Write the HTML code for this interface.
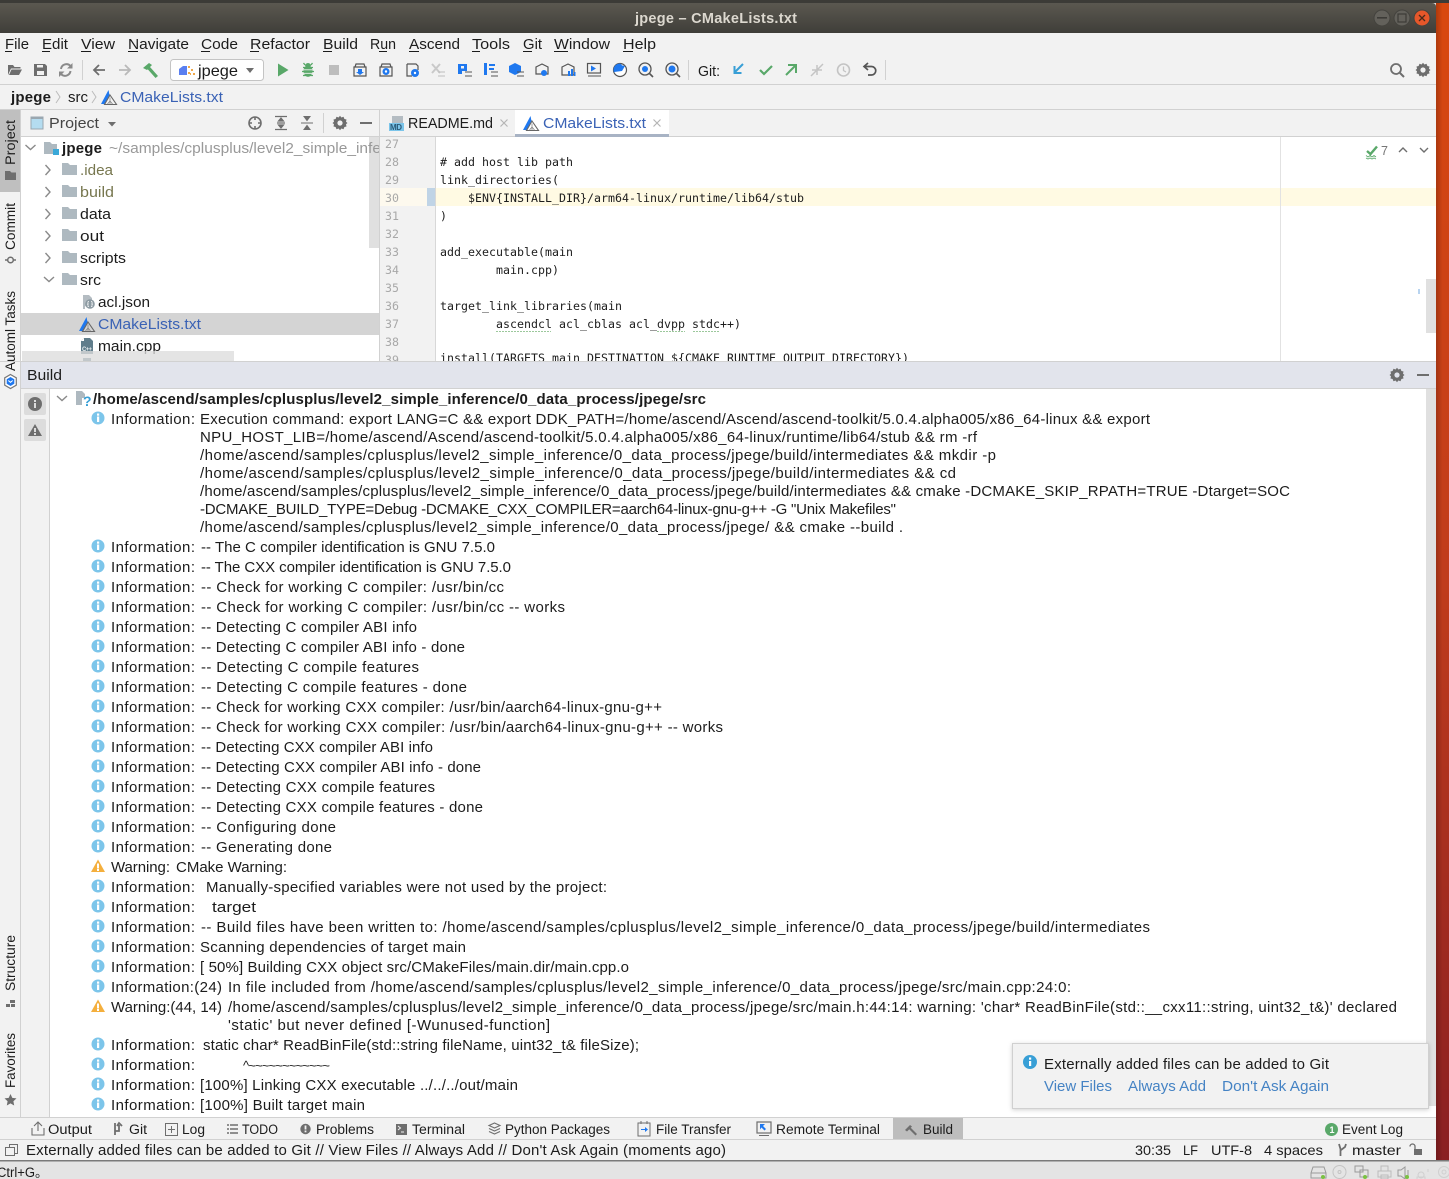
<!DOCTYPE html>
<html lang="en"><head><meta charset="utf-8"><title>jpege – CMakeLists.txt</title>
<style>
html,body{margin:0;padding:0;background:#e4e4e4;overflow:hidden}
svg{display:block}
text{font-family:"Liberation Sans","Noto Sans CJK SC",sans-serif;font-size:15px;fill:#1c1c1c;white-space:pre}
.b{font-weight:bold}
.s{font-size:13.5px}
.m{font-family:"DejaVu Sans Mono",monospace;font-size:11.6px;fill:#1c1c1c}
.n{font-family:"DejaVu Sans Mono",monospace;font-size:11.6px;fill:#a8a8a8}
.o{fill:#77774f}
.g{fill:#8c8c8c}
.bl{fill:#3a62b5}
.lk{fill:#4583c4}
.ic{fill:#6e6e6e}
.st{fill:none;stroke:#6e6e6e;stroke-width:1.6}
</style></head><body>
<svg width="1449" height="1179" viewBox="0 0 1449 1179" xmlns="http://www.w3.org/2000/svg">
<defs>
<linearGradient id="tb" x1="0" y1="0" x2="0" y2="1"><stop offset="0" stop-color="#5b5850"/><stop offset="1" stop-color="#3f3e39"/></linearGradient>
<linearGradient id="de" x1="0" y1="0" x2="0" y2="1"><stop offset="0" stop-color="#d9480f"/><stop offset=".5" stop-color="#c03c1c"/><stop offset="1" stop-color="#8a1f22"/></linearGradient>
<linearGradient id="de2" x1="0" y1="0" x2="1" y2="0"><stop offset="0" stop-color="#000" stop-opacity=".2"/><stop offset=".5" stop-color="#000" stop-opacity="0"/></linearGradient>
<filter id="sh" x="-5%" y="-20%" width="110%" height="140%"><feDropShadow dx="0" dy="1" stdDeviation="2" flood-color="#000" flood-opacity=".18"/></filter>
<g id="i"><circle cx="0" cy="0" r="6.5" fill="#7cc5ea"/><rect x="-1" y="-1.5" width="2.2" height="5.5" fill="#fff"/><rect x="-1" y="-4.5" width="2.2" height="2.2" fill="#fff"/></g>
<g id="w"><path d="M0-6.5L7 6H-7Z" fill="#f4af3d"/><rect x="-1" y="-2.5" width="2" height="5" fill="#fff"/><rect x="-1" y="3" width="2" height="2" fill="#fff"/></g>
<path id="f" d="M0 1h6l2 2h7v10H0Z" fill="#aeb9c0"/>
<path id="cr" d="M0 0l4.500 5-4.500 5" fill="none" stroke="#8a8a8a" stroke-width="1.400"/>
<path id="cd" d="M0 0l5 4.500 5-4.500" fill="none" stroke="#8a8a8a" stroke-width="1.400"/>
<g id="cm"><path d="M7.500 0L0 14h3.500L8.500 5Z" fill="#1f78ef"/><path d="M9 5l6.500 9.500H3.500Z" fill="none" stroke="#666" stroke-width="1.100"/><path d="M9 7.500v6.500M6.500 14l2.500-3 2.500 3" fill="none" stroke="#888" stroke-width=".8"/></g>
<path id="gear" d="M6-1.300L7.500 0 6 1.300 6.500 3.500 4.400 4 3.500 6.200 1.400 5.500 0 7.200-1.400 5.500-3.500 6.200-4.400 4-6.500 3.500-6 1.300-7.500 0-6-1.300-6.500-3.500-4.400-4-3.500-6.200-1.400-5.500 0-7.200 1.400-5.500 3.500-6.200 4.400-4 6.500-3.500ZM0-2.600A2.600 2.600 0 1 0 0 2.600 2.600 2.600 0 1 0 0-2.600Z" fill="#6e6e6e" fill-rule="evenodd"/>
<g id="xx"><path d="M-3.500-3.500L3.500 3.500M3.500-3.500L-3.500 3.500" stroke="#b5b5b5" stroke-width="1.200" fill="none"/></g>
<g id="mag"><circle cx="-1" cy="-1" r="6" fill="none" stroke="#555" stroke-width="1.300"/><path d="M3.500 3.500L7 7" stroke="#555" stroke-width="1.600"/></g>
</defs>

<!-- desktop + window base -->
<rect width="1449" height="1179" fill="#e4e4e4"/>
<rect x="1436" y="0" width="13" height="1160" fill="url(#de)"/>
<rect x="1436" y="0" width="13" height="1160" fill="url(#de2)"/>
<rect width="1449" height="3" fill="#3c3b37"/>
<rect x="0" y="33" width="1436" height="1127" fill="#f2f2f2"/>
<path d="M0 3H1432Q1436 3 1436 7V33H0Z" fill="url(#tb)"/>

<text class="b" x="635" y="23" textLength="162" style="fill:#dcd8cf;font-size:14.5px">jpege – CMakeLists.txt</text>
<circle cx="1382" cy="18" r="8" fill="#63615b" stroke="#44433e"/><rect x="1377" y="17" width="10" height="1.600" fill="#3c3b37"/>
<circle cx="1402" cy="18" r="8" fill="#63615b" stroke="#44433e"/><rect x="1398" y="14" width="8" height="8" fill="none" stroke="#3c3b37" stroke-width="1.200"/>
<circle cx="1422" cy="18" r="8" fill="#e6572a" stroke="#44433e"/><path d="M1419 15l6 6M1425 15l-6 6" stroke="#4a2a1a" stroke-width="1.300"/>

<!-- menu -->
<text x="5" y="49" textLength="24" lengthAdjust="spacingAndGlyphs">File</text><text x="42" y="49" textLength="26" lengthAdjust="spacingAndGlyphs">Edit</text><text x="81" y="49" textLength="34" lengthAdjust="spacingAndGlyphs">View</text><text x="128" y="49" textLength="61" lengthAdjust="spacingAndGlyphs">Navigate</text><text x="201" y="49" textLength="37" lengthAdjust="spacingAndGlyphs">Code</text><text x="250" y="49" textLength="60" lengthAdjust="spacingAndGlyphs">Refactor</text><text x="323" y="49" textLength="35" lengthAdjust="spacingAndGlyphs">Build</text><text x="370" y="49" textLength="26" lengthAdjust="spacingAndGlyphs">Run</text><text x="409" y="49" textLength="51" lengthAdjust="spacingAndGlyphs">Ascend</text><text x="472" y="49" textLength="38" lengthAdjust="spacingAndGlyphs">Tools</text><text x="523" y="49" textLength="19" lengthAdjust="spacingAndGlyphs">Git</text><text x="554" y="49" textLength="56" lengthAdjust="spacingAndGlyphs">Window</text><text x="623" y="49" textLength="33" lengthAdjust="spacingAndGlyphs">Help</text>
<g fill="#1c1c1c"><rect x="5" y="51" width="7" height="1"/><rect x="42" y="51" width="8" height="1"/><rect x="81" y="51" width="10" height="1"/><rect x="128" y="51" width="10" height="1"/><rect x="201" y="51" width="9" height="1"/><rect x="250" y="51" width="9" height="1"/><rect x="323" y="51" width="9" height="1"/><rect x="379" y="51" width="8" height="1"/><rect x="409" y="51" width="10" height="1"/><rect x="472" y="51" width="8" height="1"/><rect x="523" y="51" width="9" height="1"/><rect x="554" y="51" width="14" height="1"/><rect x="623" y="51" width="10" height="1"/></g>

<!-- toolbar -->
<rect x="0" y="84" width="1436" height="1" fill="#d1d1d1"/>
<rect x="0" y="109" width="1436" height="1" fill="#d1d1d1"/>
<path d="M8 65h5l1.500 2h6v1.500H11L8 75ZM11.500 69.500H22L19 75H9Z" fill="#6e6e6e"/>
<path d="M34 64h11l2 2v10H34Z" fill="#6e6e6e"/><rect x="37" y="65" width="6" height="2.500" fill="#f2f2f2"/><rect x="37" y="71" width="7" height="4" fill="#f2f2f2"/>
<path d="M61 69a5.500 5.500 0 0 1 9.500-3M70.500 71a5.500 5.500 0 0 1-9.500 3" fill="none" stroke="#8a8a8a" stroke-width="2"/><path d="M72.500 63v5.500H67ZM59 77v-5.500h5.500Z" fill="#8a8a8a"/>
<rect x="82" y="60" width="1" height="20" fill="#d1d1d1"/>
<path d="M105 70H94M99 65l-5 5 5 5" fill="none" stroke="#6e6e6e" stroke-width="1.800"/>
<path d="M119 70h11M125 65l5 5-5 5" fill="none" stroke="#b9b9b9" stroke-width="1.800"/>
<path d="M143 68l6-5 3 2-5 5ZM150 67l8 9-2.500 2-8-9Z" fill="#59a869"/>
<rect x="170.500" y="59.500" width="93" height="21" rx="3" fill="#fff" stroke="#c4c4c4"/>
<path d="M179 75v-6l4-3h4v9Z" fill="#5a7ff0"/><path d="M188 66h2v2h-2ZM191 69h2v2h-2ZM188 72h2v2h-2ZM193 73h2v2h-2ZM190 73h1v2h-1Z" fill="#f0a84a"/>
<text x="198" y="76" textLength="40" lengthAdjust="spacingAndGlyphs" style="font-size:16px">jpege</text>
<path d="M246 68h8l-4 5Z" fill="#6e6e6e"/>
<path d="M278 63.500L288.500 70 278 76.500Z" fill="#59a869"/>
<path d="M303 67.500h10M302 71.500h12M303 75.500h10M305 65l-1.500-2M311 65l1.500-2" stroke="#59a869" stroke-width="1.300" fill="none"/><ellipse cx="308" cy="71" rx="4.500" ry="5.800" fill="#59a869"/><path d="M305 66a3 3 0 0 1 6 0Z" fill="#59a869"/><path d="M304 69.800h8M304 73.300h8" stroke="#f2f2f2" stroke-width=".9"/>
<rect x="329" y="65" width="10" height="10" fill="#bdbdbd"/>
<g fill="none" stroke="#555" stroke-width="1.200"><path d="M354 67h12v9h-12ZM355 67l1-3h8l1 3"/><path d="M380 67h12v9h-12ZM381 67l1-3h8l1 3"/><path d="M407 64h9l2 2v4M407 64v12h5"/></g>
<path d="M358 69h4v3h2l-4 3-4-3h2Z" fill="#1f78ef"/><circle cx="386" cy="71.500" r="3.500" fill="#1f78ef"/><circle cx="386" cy="71.500" r="1.200" fill="#fff"/><circle cx="415" cy="73" r="4" fill="#1f78ef"/><circle cx="415" cy="73" r="1.200" fill="#fff"/>
<path d="M432 64l8 9M440 64l-8 9" stroke="#c9c9c9" stroke-width="2"/><path d="M438 72h7M438 76h7" stroke="#bdbdbd"/>
<path d="M458 64h9v7h-5v3h-4Z" fill="#1f78ef"/><rect x="461" y="66" width="3" height="2.500" fill="#f2f2f2"/>
<path d="M484 63h3v12h-3ZM489 64h6v2h-6ZM489 68h5v2h-5Z" fill="#1f78ef"/>
<path d="M509 66l6-3 6 3v6l-6 3-6-3Z" fill="#1f78ef"/>
<path d="M465 72h7M472 76h-7M491 72h7M498 76h-7M517 72h7M524 76h-7" stroke="#555" stroke-width="1" fill="none"/>
<path d="M536 67l6-3 6 3v7h-12Z" fill="none" stroke="#555" stroke-width="1.200"/><circle cx="544" cy="73" r="3" fill="#1f78ef"/>
<path d="M562 67l6-3 6 3v8h-12Z" fill="none" stroke="#555" stroke-width="1.200"/><path d="M568 71h2v5h-2ZM571 69h2v7h-2ZM574 72h1.500v4H574Z" fill="#1f78ef"/>
<rect x="587.500" y="63.500" width="13" height="9.500" fill="none" stroke="#555" stroke-width="1.200"/><path d="M591 65.500l5 3-5 3Z" fill="#1f78ef"/><path d="M588 76h13" stroke="#555"/>
<circle cx="620" cy="70" r="6.500" fill="#fff" stroke="#555" stroke-width="1.200"/><path d="M620 63.500a6.500 6.500 0 0 0-6 9L622 65Z" fill="#1f78ef"/><path d="M614 72l6-7 5 1-3 5Z" fill="#1f78ef"/>
<use href="#mag" x="646" y="70"/><circle cx="645" cy="69" r="3" fill="#1f78ef"/>
<use href="#mag" x="673" y="70"/><circle cx="672" cy="69" r="3.500" fill="#1f78ef"/>
<rect x="688" y="60" width="1" height="20" fill="#d1d1d1"/>
<text x="698" y="76" textLength="22" lengthAdjust="spacingAndGlyphs">Git:</text>
<path d="M743 64l-8 8M734.500 66v7h7" fill="none" stroke="#389fd6" stroke-width="2"/>
<path d="M760 70l4 4 8-8" fill="none" stroke="#59a869" stroke-width="2.200"/>
<path d="M786 75l9-9M788 65h8v8" fill="none" stroke="#59a869" stroke-width="2"/>
<path d="M811 76l5-5M817 70l6-6M812 70h5v5M817 65v5h5" fill="none" stroke="#c4c4c4" stroke-width="1.500"/>
<circle cx="843.500" cy="70" r="6" fill="none" stroke="#c4c4c4" stroke-width="1.600"/><path d="M843.500 66.500v4l2.500 1.500" fill="none" stroke="#c4c4c4" stroke-width="1.300"/>
<path d="M868 63l-4 3.500 4 3.500M864.500 66.500h7a4 4 0 0 1 0 8.500H868" fill="none" stroke="#555" stroke-width="1.700"/>
<rect x="885" y="60" width="1" height="20" fill="#d1d1d1"/>
<circle cx="1396" cy="69" r="5" fill="none" stroke="#6e6e6e" stroke-width="1.800"/><path d="M1400 73l4 4" stroke="#6e6e6e" stroke-width="2"/>
<use href="#gear" x="1423" y="70"/>

<!-- nav bar -->
<text class="b" x="11" y="102" textLength="40">jpege</text>
<path d="M56 91l4 6-4 6" fill="none" stroke="#bbb"/>
<text x="68" y="102" textLength="20" lengthAdjust="spacingAndGlyphs">src</text>
<path d="M92 91l4 6-4 6" fill="none" stroke="#bbb"/>
<use href="#cm" x="101" y="90"/>
<text class="bl" x="120" y="102" textLength="103" lengthAdjust="spacingAndGlyphs">CMakeLists.txt</text>

<!-- stripe + panel headers -->
<rect x="0" y="136" width="1436" height="1" fill="#d1d1d1"/>
<rect x="0" y="110" width="20" height="82" fill="#bfbfbf"/>
<rect x="20" y="110" width="1" height="1007" fill="#d1d1d1"/>
<rect x="31" y="117" width="12" height="12" fill="#b4dcf0" stroke="#9aa7b0"/><rect x="31" y="117" width="12" height="2" fill="#9aa7b0"/>
<text x="49" y="128" textLength="50" lengthAdjust="spacingAndGlyphs" style="fill:#444">Project</text>
<path d="M108 122h8l-4 4.500Z" fill="#6e6e6e"/>
<circle cx="255" cy="123" r="6" class="st"/><path d="M255 117v3M255 126v3M249 123h3M258 123h3" stroke="#6e6e6e" stroke-width="1.600"/>
<path d="M275 116.500h12M275 129.500h12M281 118l-2.500 3h5ZM281 128l-2.500-3h5ZM277 123h8" stroke="#6e6e6e" stroke-width="1.200" fill="#6e6e6e"/>
<path d="M301 123h12M304 116.500l3 4 3-4ZM304 129.500l3-4 3 4Z" stroke="#6e6e6e" stroke-width="1" fill="#6e6e6e"/>
<rect x="323" y="113" width="1" height="20" fill="#d1d1d1"/>
<use href="#gear" x="340" y="123"/>
<rect x="360" y="122" width="12" height="2" fill="#6e6e6e"/>
<rect x="379" y="110" width="1" height="251" fill="#d1d1d1"/>

<!-- tabs -->
<rect x="392" y="116" width="11" height="8" fill="#b4bcc2"/><rect x="389" y="123" width="15" height="8" fill="#7cc5ea"/><text x="390" y="130" textLength="12" style="font-size:8px;font-weight:bold;fill:#2a5a78">MD</text>
<text x="408" y="128" textLength="85" lengthAdjust="spacingAndGlyphs">README.md</text><use href="#xx" x="504" y="123"/>
<rect x="515" y="110" width="154" height="24" fill="#fff"/><rect x="515" y="134" width="154" height="3" fill="#a8b3c4"/>
<use href="#cm" x="523" y="116"/>
<text class="bl" x="543" y="128" textLength="103" lengthAdjust="spacingAndGlyphs">CMakeLists.txt</text><use href="#xx" x="657" y="123"/>

<!-- tree -->
<rect x="21" y="137" width="358" height="224" fill="#fff"/>
<rect x="369" y="137" width="10" height="111" fill="#e0e0e0"/>
<rect x="21" y="313" width="358" height="22" fill="#d4d4d4"/>
<use href="#cd" x="25.500" y="145"/>
<path d="M44 142h6l2 2h5v10H44Z" fill="#aeb9c0"/><rect x="53" y="149" width="6" height="6" fill="#3aa8d8"/>
<text class="b" x="62" y="153" textLength="40">jpege</text>
<svg x="0" y="137" width="379" height="30"><text x="109" y="16" textLength="272" lengthAdjust="spacingAndGlyphs" style="fill:#999">~/samples/cplusplus/level2_simple_infe</text></svg>
<use href="#cr" x="45.500" y="165"/><use href="#f" x="62" y="162"/><text class="o" x="80" y="175" textLength="33" lengthAdjust="spacingAndGlyphs">.idea</text>
<use href="#cr" x="45.500" y="187"/><use href="#f" x="62" y="184"/><text class="o" x="80" y="197" textLength="34" lengthAdjust="spacingAndGlyphs">build</text>
<use href="#cr" x="45.500" y="209"/><use href="#f" x="62" y="206"/><text x="80" y="219" textLength="31" lengthAdjust="spacingAndGlyphs">data</text>
<use href="#cr" x="45.500" y="231"/><use href="#f" x="62" y="228"/><text x="80" y="241" textLength="24" lengthAdjust="spacingAndGlyphs">out</text>
<use href="#cr" x="45.500" y="253"/><use href="#f" x="62" y="250"/><text x="80" y="263" textLength="46" lengthAdjust="spacingAndGlyphs">scripts</text>
<use href="#cd" x="44" y="277"/><use href="#f" x="62" y="272"/><text x="80" y="285" textLength="21" lengthAdjust="spacingAndGlyphs">src</text>
<path d="M83 295h6l3 3v5h-3a5 5 0 0 0-4 6h-2Z" fill="#b4bcc2"/><circle cx="90" cy="304" r="4.800" fill="#8c9aa2"/><path d="M89 301.500q-1.500 0-1 1.500t-1 1q1.500 0 1 1.500t1 1M91 301.500q1.500 0 1 1.500t1 1q-1.500 0-1 1.500t-1 1" fill="none" stroke="#fff" stroke-width=".7"/><text x="98" y="307" textLength="52" lengthAdjust="spacingAndGlyphs">acl.json</text>
<use href="#cm" x="79" y="317"/><text class="bl" x="98" y="329" textLength="103" lengthAdjust="spacingAndGlyphs">CMakeLists.txt</text>
<path d="M84 338h6l3 3v13H81v-13Z" fill="#607d8b"/><path d="M84 338v3h-3Z" fill="#fff"/><text x="82" y="351" textLength="10" style="font-size:6px;font-weight:bold;fill:#e8eef0">C++</text><text x="98" y="351" textLength="63" lengthAdjust="spacingAndGlyphs">main.cpp</text>
<rect x="83" y="358" width="8" height="3" fill="#607d8b"/>
<rect x="22" y="351" width="212" height="10" fill="#dcdcdc" fill-opacity=".78"/>

<!-- stripe text -->
<text class="s" transform="translate(15,165) rotate(-90)" textLength="45" lengthAdjust="spacingAndGlyphs">Project</text>
<path d="M5 171h5l1.500 1.500H16V180H5Z" fill="#6e6e6e"/>
<text class="s" transform="translate(15,250) rotate(-90)" textLength="47" lengthAdjust="spacingAndGlyphs">Commit</text>
<circle cx="10.500" cy="260" r="2.800" fill="none" stroke="#6e6e6e" stroke-width="1.500"/><path d="M5 260h3M13 260h3" stroke="#6e6e6e" stroke-width="1.500"/>
<text class="s" transform="translate(15,371) rotate(-90)" textLength="80" lengthAdjust="spacingAndGlyphs">Automl Tasks</text>
<path d="M10.500 374.500l5.800 3.300v7.400l-5.800 3.300-5.800-3.300v-7.400Z" fill="#fff" stroke="#777" stroke-width="1.200"/><path d="M10.500 377l3.800 2.200v4.600l-3.800 2.200-3.800-2.200v-4.600Z" fill="#1f78ef"/><path d="M8.300 380.500l2.200 1.800 2.200-1.800" stroke="#fff" fill="none"/>
<text class="s" transform="translate(15,991) rotate(-90)" textLength="56" lengthAdjust="spacingAndGlyphs">Structure</text>
<path d="M10 1000h5v3h-5ZM6 1004h4v3H6ZM11 1004h4v3h-4Z" fill="#6e6e6e"/>
<text class="s" transform="translate(15,1088) rotate(-90)" textLength="55" lengthAdjust="spacingAndGlyphs">Favorites</text>
<path d="M10.500 1094l1.800 3.900 4.200.5-3.100 2.900.8 4.200-3.700-2.100-3.700 2.100.8-4.200-3.100-2.900 4.200-.5Z" fill="#6e6e6e"/>

<!-- editor -->
<rect x="380" y="137" width="1056" height="224" fill="#fff"/>
<rect x="380" y="137" width="55" height="224" fill="#f2f2f2"/>
<rect x="435" y="137" width="1" height="224" fill="#d8d8d8"/>
<rect x="436" y="188" width="1000" height="18" fill="#fffae3"/>
<rect x="380" y="188" width="47" height="18" fill="#fdf9ee"/>
<rect x="427" y="188" width="8" height="18" fill="#c0d4e6"/>
<rect x="1280" y="137" width="1" height="224" fill="#e2e2e2"/>
<text class="n" x="385" y="148">27</text><text class="n" x="385" y="166">28</text><text class="n" x="385" y="184">29</text><text class="n" x="385" y="202">30</text><text class="n" x="385" y="220">31</text><text class="n" x="385" y="238">32</text><text class="n" x="385" y="256">33</text><text class="n" x="385" y="274">34</text><text class="n" x="385" y="292">35</text><text class="n" x="385" y="310">36</text><text class="n" x="385" y="328">37</text><text class="n" x="385" y="346">38</text>
<text class="m" x="440" y="166" textLength="133"># add host lib path</text>
<text class="m" x="440" y="184" textLength="119">link_directories(</text>
<text class="m" x="468" y="202" textLength="336">$ENV{INSTALL_DIR}/arm64-linux/runtime/lib64/stub</text>
<text class="m" x="440" y="220" textLength="7">)</text>
<text class="m" x="440" y="256" textLength="133">add_executable(main</text>
<text class="m" x="496" y="274" textLength="63">main.cpp)</text>
<text class="m" x="440" y="310" textLength="182">target_link_libraries(main</text>
<text class="m" x="496" y="328" textLength="245">ascendcl acl_cblas acl_dvpp stdc++)</text>
<path d="M496 331.500h55M657 331.500h28M693 331.500h26" stroke="#9cc89c" stroke-width="1" stroke-dasharray="2 1"/>
<svg x="380" y="340" width="1056" height="21"><text class="n" x="5" y="24">39</text><text class="m" x="60" y="22" textLength="469">install(TARGETS main DESTINATION ${CMAKE_RUNTIME_OUTPUT_DIRECTORY})</text></svg>
<path d="M1367 151l3.500 3 6.500-7.500" fill="none" stroke="#59a869" stroke-width="2.400"/><path d="M1366 155.500l2 1.500 2-1.500 2 1.500 2-1.500 2 1.500M1366 158l2 1 2-1 2 1 2-1 2 1" fill="none" stroke="#59a869" stroke-width=".8"/>
<text x="1381" y="155" textLength="7" style="font-size:12.500px;fill:#777">7</text>
<path d="M1399 152l4-4 4 4M1420 148l4 4 4-4" fill="none" stroke="#6e6e6e" stroke-width="1.400"/>
<rect x="1426" y="279" width="10" height="54" fill="#e0e0e0"/>
<rect x="1418" y="289" width="2" height="5" fill="#b8d4f0"/>

<!-- build header -->
<rect x="21" y="361" width="1415" height="27" fill="#e2e4ec"/>
<rect x="0" y="361" width="1436" height="1" fill="#d1d1d1"/><rect x="21" y="388" width="1415" height="1" fill="#d1d1d1"/>
<text x="27" y="380" textLength="35" lengthAdjust="spacingAndGlyphs">Build</text>
<use href="#gear" x="1397" y="375"/><rect x="1417" y="374" width="12" height="2" fill="#6e6e6e"/>

<!-- build body -->
<rect x="49" y="389" width="1387" height="728" fill="#fff"/>
<rect x="49" y="389" width="1" height="728" fill="#d1d1d1"/>
<rect x="1426" y="389" width="10" height="717" fill="#e0e0e0"/>
<rect x="24" y="393" width="22" height="22" rx="2" fill="#dcdcdc"/><circle cx="35" cy="404" r="7" fill="#6e6e6e"/><rect x="34" y="403" width="2" height="5" fill="#dcdcdc"/><rect x="34" y="400" width="2" height="2" fill="#dcdcdc"/>
<rect x="24" y="419" width="22" height="22" rx="2" fill="#dcdcdc"/><path d="M35 424l7 12H28Z" fill="#6e6e6e"/><rect x="34" y="428" width="2" height="4" fill="#dcdcdc"/><rect x="34" y="433" width="2" height="2" fill="#dcdcdc"/>
<use href="#cd" x="57" y="396"/>
<path d="M76 391h6l3 3v4h-3v7H76Z" fill="#aeb9c0"/><text x="83" y="406" textLength="8" style="font-size:14px;font-weight:bold;fill:#389fd6">?</text>
<text class="b" x="93" y="404" textLength="613">/home/ascend/samples/cplusplus/level2_simple_inference/0_data_process/jpege/src</text>

<use href="#i" x="98" y="418"/><text x="111" y="424" textLength="84">Information:</text>
<text x="200" y="424" textLength="950">Execution command: export LANG=C &amp;&amp; export DDK_PATH=/home/ascend/Ascend/ascend-toolkit/5.0.4.alpha005/x86_64-linux &amp;&amp; export</text>
<text x="200" y="442" textLength="777">NPU_HOST_LIB=/home/ascend/Ascend/ascend-toolkit/5.0.4.alpha005/x86_64-linux/runtime/lib64/stub &amp;&amp; rm -rf</text>
<text x="200" y="460" textLength="796">/home/ascend/samples/cplusplus/level2_simple_inference/0_data_process/jpege/build/intermediates &amp;&amp; mkdir -p</text>
<text x="200" y="478" textLength="756">/home/ascend/samples/cplusplus/level2_simple_inference/0_data_process/jpege/build/intermediates &amp;&amp; cd</text>
<text x="200" y="496" textLength="1090">/home/ascend/samples/cplusplus/level2_simple_inference/0_data_process/jpege/build/intermediates &amp;&amp; cmake -DCMAKE_SKIP_RPATH=TRUE -Dtarget=SOC</text>
<text x="200" y="514" textLength="696">-DCMAKE_BUILD_TYPE=Debug -DCMAKE_CXX_COMPILER=aarch64-linux-gnu-g++ -G "Unix Makefiles"</text>
<text x="200" y="532" textLength="703">/home/ascend/samples/cplusplus/level2_simple_inference/0_data_process/jpege/ &amp;&amp; cmake --build .</text>

<use href="#i" x="98" y="546"/><text x="111" y="552" textLength="84">Information:</text><text x="201" y="552" textLength="294">-- The C compiler identification is GNU 7.5.0</text>
<use href="#i" x="98" y="566"/><text x="111" y="572" textLength="84">Information:</text><text x="201" y="572" textLength="310">-- The CXX compiler identification is GNU 7.5.0</text>
<use href="#i" x="98" y="586"/><text x="111" y="592" textLength="84">Information:</text><text x="201" y="592" textLength="303">-- Check for working C compiler: /usr/bin/cc</text>
<use href="#i" x="98" y="606"/><text x="111" y="612" textLength="84">Information:</text><text x="201" y="612" textLength="364">-- Check for working C compiler: /usr/bin/cc -- works</text>
<use href="#i" x="98" y="626"/><text x="111" y="632" textLength="84">Information:</text><text x="201" y="632" textLength="216">-- Detecting C compiler ABI info</text>
<use href="#i" x="98" y="646"/><text x="111" y="652" textLength="84">Information:</text><text x="201" y="652" textLength="264">-- Detecting C compiler ABI info - done</text>
<use href="#i" x="98" y="666"/><text x="111" y="672" textLength="84">Information:</text><text x="201" y="672" textLength="218">-- Detecting C compile features</text>
<use href="#i" x="98" y="686"/><text x="111" y="692" textLength="84">Information:</text><text x="201" y="692" textLength="266">-- Detecting C compile features - done</text>
<use href="#i" x="98" y="706"/><text x="111" y="712" textLength="84">Information:</text><text x="201" y="712" textLength="461">-- Check for working CXX compiler: /usr/bin/aarch64-linux-gnu-g++</text>
<use href="#i" x="98" y="726"/><text x="111" y="732" textLength="84">Information:</text><text x="201" y="732" textLength="522">-- Check for working CXX compiler: /usr/bin/aarch64-linux-gnu-g++ -- works</text>
<use href="#i" x="98" y="746"/><text x="111" y="752" textLength="84">Information:</text><text x="201" y="752" textLength="232">-- Detecting CXX compiler ABI info</text>
<use href="#i" x="98" y="766"/><text x="111" y="772" textLength="84">Information:</text><text x="201" y="772" textLength="280">-- Detecting CXX compiler ABI info - done</text>
<use href="#i" x="98" y="786"/><text x="111" y="792" textLength="84">Information:</text><text x="201" y="792" textLength="234">-- Detecting CXX compile features</text>
<use href="#i" x="98" y="806"/><text x="111" y="812" textLength="84">Information:</text><text x="201" y="812" textLength="282">-- Detecting CXX compile features - done</text>
<use href="#i" x="98" y="826"/><text x="111" y="832" textLength="84">Information:</text><text x="201" y="832" textLength="135">-- Configuring done</text>
<use href="#i" x="98" y="846"/><text x="111" y="852" textLength="84">Information:</text><text x="201" y="852" textLength="131">-- Generating done</text>
<use href="#w" x="98" y="866"/><text x="111" y="872" textLength="59">Warning:</text><text x="176" y="872" textLength="111">CMake Warning:</text>
<use href="#i" x="98" y="886"/><text x="111" y="892" textLength="84">Information:</text><text x="206" y="892" textLength="401">Manually-specified variables were not used by the project:</text>
<use href="#i" x="98" y="906"/><text x="111" y="912" textLength="84">Information:</text><text x="212" y="912" textLength="44" lengthAdjust="spacingAndGlyphs">target</text>
<use href="#i" x="98" y="926"/><text x="111" y="932" textLength="84">Information:</text><text x="201" y="932" textLength="949">-- Build files have been written to: /home/ascend/samples/cplusplus/level2_simple_inference/0_data_process/jpege/build/intermediates</text>
<use href="#i" x="98" y="946"/><text x="111" y="952" textLength="84">Information:</text><text x="200" y="952" textLength="266">Scanning dependencies of target main</text>
<use href="#i" x="98" y="966"/><text x="111" y="972" textLength="84">Information:</text><text x="200" y="972" textLength="429">[ 50%] Building CXX object src/CMakeFiles/main.dir/main.cpp.o</text>
<use href="#i" x="98" y="986"/><text x="111" y="992" textLength="111">Information:(24)</text><text x="228" y="992" textLength="843">In file included from /home/ascend/samples/cplusplus/level2_simple_inference/0_data_process/jpege/src/main.cpp:24:0:</text>
<use href="#w" x="98" y="1006"/><text x="111" y="1012" textLength="111">Warning:(44, 14)</text><text x="228" y="1012" textLength="1169">/home/ascend/samples/cplusplus/level2_simple_inference/0_data_process/jpege/src/main.h:44:14: warning: 'char* ReadBinFile(std::__cxx11::string, uint32_t&amp;)' declared</text>
<text x="228" y="1030" textLength="322">'static' but never defined [-Wunused-function]</text>
<use href="#i" x="98" y="1044"/><text x="111" y="1050" textLength="84">Information:</text><text x="203" y="1050" textLength="436">static char* ReadBinFile(std::string fileName, uint32_t&amp; fileSize);</text>
<use href="#i" x="98" y="1064"/><text x="111" y="1070" textLength="84">Information:</text><text x="243" y="1070" textLength="87" style="font-size:13px">^~~~~~~~~~~~~</text>
<use href="#i" x="98" y="1084"/><text x="111" y="1090" textLength="84">Information:</text><text x="200" y="1090" textLength="318">[100%] Linking CXX executable ../../../out/main</text>
<use href="#i" x="98" y="1104"/><text x="111" y="1110" textLength="84">Information:</text><text x="200" y="1110" textLength="165">[100%] Built target main</text>

<!-- notification -->
<rect x="1012.500" y="1043.500" width="416" height="65" fill="#f2f2f2" stroke="#d0d0d0" filter="url(#sh)"/>
<circle cx="1030" cy="1062" r="7" fill="#389fd6"/><rect x="1029" y="1061" width="2.200" height="5" fill="#fff"/><rect x="1029" y="1057.500" width="2.200" height="2.200" fill="#fff"/>
<text x="1044" y="1069" textLength="285">Externally added files can be added to Git</text>
<text class="lk" x="1044" y="1091" textLength="68" lengthAdjust="spacingAndGlyphs">View Files</text><text class="lk" x="1128" y="1091" textLength="78" lengthAdjust="spacingAndGlyphs">Always Add</text><text class="lk" x="1222" y="1091" textLength="107" lengthAdjust="spacingAndGlyphs">Don't Ask Again</text>

<!-- bottom tool bar -->
<rect x="0" y="1117" width="1436" height="1" fill="#d1d1d1"/>
<rect x="0" y="1139" width="1436" height="1" fill="#d1d1d1"/>
<rect x="893" y="1118" width="70" height="21" fill="#bdbdbd"/>
<path d="M32 1128v7h12v-7M38 1131v-9M34 1126l4-4 4 4" fill="none" stroke="#6e6e6e" stroke-width="1.100"/>
<text class="s" x="48" y="1134" textLength="44" lengthAdjust="spacingAndGlyphs">Output</text>
<path d="M115 1123v12M115 1131h4v-6M117 1126l2-3 3 3" fill="none" stroke="#6e6e6e" stroke-width="1.800"/><text class="s" x="129" y="1134" textLength="18" lengthAdjust="spacingAndGlyphs">Git</text>
<rect x="165.500" y="1123.500" width="12" height="12" fill="none" stroke="#6e6e6e"/><path d="M171.500 1126v7M168 1129.500h7" stroke="#6e6e6e"/><text class="s" x="182" y="1134" textLength="23" lengthAdjust="spacingAndGlyphs">Log</text>
<path d="M230 1125h8M230 1129h8M230 1133h8M227 1125h2M227 1129h2M227 1133h2" stroke="#6e6e6e" stroke-width="1.400"/><text class="s" x="242" y="1134" textLength="36" lengthAdjust="spacingAndGlyphs">TODO</text>
<circle cx="305.500" cy="1129" r="5.200" fill="#6e6e6e"/><rect x="304.600" y="1125.500" width="1.800" height="4" fill="#f2f2f2"/><rect x="304.600" y="1130.500" width="1.800" height="1.800" fill="#f2f2f2"/><text class="s" x="316" y="1134" textLength="58" lengthAdjust="spacingAndGlyphs">Problems</text>
<rect x="396" y="1124" width="11" height="11" fill="#6e6e6e"/><path d="M398 1126l2.500 2-2.500 2M401 1132h3" stroke="#f2f2f2" fill="none"/><text class="s" x="412" y="1134" textLength="53" lengthAdjust="spacingAndGlyphs">Terminal</text>
<path d="M494.500 1123l5.500 2.500-5.500 2.500-5.500-2.500ZM489 1128.500l5.500 2.500 5.500-2.500M489 1131.500l5.500 2.500 5.500-2.500" fill="none" stroke="#6e6e6e" stroke-width="1.100"/><text class="s" x="505" y="1134" textLength="105" lengthAdjust="spacingAndGlyphs">Python Packages</text>
<rect x="638" y="1123" width="12" height="13" fill="none" stroke="#6e6e6e"/><path d="M641 1121v3M647 1121v3" stroke="#6e6e6e"/><path d="M641 1129h4v-2l3 2.500-3 2.500v-2h-4Z" fill="#1f78ef"/><text class="s" x="656" y="1134" textLength="75" lengthAdjust="spacingAndGlyphs">File Transfer</text>
<rect x="757" y="1122" width="14" height="11" fill="none" stroke="#6e6e6e" stroke-width="1.200"/><path d="M760 1124h5l-2 2 3 3-1.500 1.500-3-3-1.500 2Z" fill="#1f78ef"/><path d="M759 1135.500h10" stroke="#6e6e6e"/><text class="s" x="776" y="1134" textLength="104" lengthAdjust="spacingAndGlyphs">Remote Terminal</text>
<path d="M905 1130l5-5 2 1.500-5 5ZM910 1127l7 7-1.500 1.500-7-7Z" fill="#6e6e6e"/><text class="s" x="923" y="1134" textLength="30" lengthAdjust="spacingAndGlyphs">Build</text>
<circle cx="1331.500" cy="1129.500" r="6.500" fill="#59a869"/><text x="1329.500" y="1133" textLength="4" style="font-size:9px;font-weight:bold;fill:#fff">1</text><text class="s" x="1342" y="1134" textLength="61" lengthAdjust="spacingAndGlyphs">Event Log</text>

<!-- status bar -->
<rect x="9.500" y="1144.500" width="8" height="9" fill="#f2f2f2" stroke="#6e6e6e"/><rect x="5.500" y="1147.500" width="9" height="8" fill="#f2f2f2" stroke="#6e6e6e"/>
<text x="26" y="1155" textLength="700">Externally added files can be added to Git // View Files // Always Add // Don't Ask Again (moments ago)</text>
<text x="1135" y="1155" textLength="36" lengthAdjust="spacingAndGlyphs" style="font-size:14px">30:35</text><text x="1183" y="1155" textLength="15" lengthAdjust="spacingAndGlyphs" style="font-size:14px">LF</text><text x="1211" y="1155" textLength="41" lengthAdjust="spacingAndGlyphs" style="font-size:14px">UTF-8</text><text x="1264" y="1155" textLength="59" lengthAdjust="spacingAndGlyphs" style="font-size:14px">4 spaces</text>
<path d="M1339 1144l1.500 5v7M1346 1144l-1 3-4 3" fill="none" stroke="#6e6e6e" stroke-width="1.800"/>
<text x="1352" y="1155" textLength="49" lengthAdjust="spacingAndGlyphs" style="font-size:14px">master</text>
<rect x="1414" y="1149" width="8" height="6" fill="#6e6e6e"/><path d="M1415 1149v-2.500a2.500 2.500 0 0 0-5 0" fill="none" stroke="#6e6e6e" stroke-width="1.300"/>
<rect x="0" y="1160" width="1449" height="1.500" fill="#7a7a7a"/>

<!-- VM status strip -->
<svg x="0" y="1161" width="1449" height="18"><text x="-3" y="16" textLength="38" lengthAdjust="spacingAndGlyphs" style="font-size:13.5px">Ctrl+G</text><text x="35" y="16" style="font-size:13px">。</text>
<g fill="none" stroke="#9a9a9a" stroke-width="1">
<path d="M1313 6h11l2 6v5h-15v-5ZM1311 12h15"/>
<circle cx="1339.500" cy="11" r="6.500" stroke="#c4c4c4"/><circle cx="1339.500" cy="11" r="1.500" stroke="#c4c4c4"/>
<path d="M1355 5h8v6h-8ZM1360 9h8v7h-8Z"/>
<path d="M1378 10h13v6h-13ZM1381 10V5h7v5M1381 14h7v4h-7Z" stroke="#bbb"/>
<path d="M1398 9h3l4-3v12l-4-3h-3ZM1408 9v6" />
<path d="M1421 11a3 3 0 1 0 .1 0ZM1417 18v-2h8v2M1428 8v3" stroke="#d0d0d0"/>
<circle cx="1444" cy="11" r="5.500" stroke="#d0d0d0"/><circle cx="1444" cy="11" r="2" stroke="#d0d0d0"/>
</g>
<circle cx="1323" cy="16" r="2" fill="#7ac142"/><circle cx="1365" cy="16" r="2" fill="#7ac142"/><circle cx="1407" cy="16" r="2" fill="#7ac142"/></svg>
</svg>
</body></html>
